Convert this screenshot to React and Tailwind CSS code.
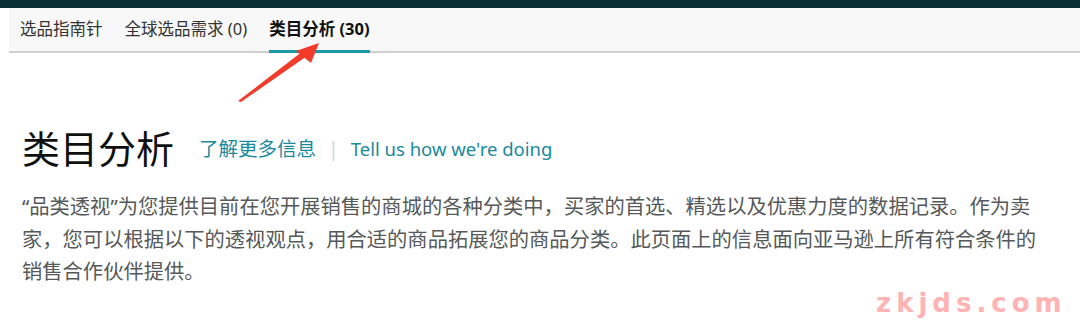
import React from 'react';

const tabs = [
  { label: '选品指南针' },
  { label: '全球选品需求 (0)' },
  { label: '类目分析 (30)', active: true },
];

const App = () => {
  return (
    <div className="relative w-[1080px] h-[333px] overflow-hidden bg-white font-['Noto_Sans','Noto_Sans_CJK_SC',sans-serif]">
      {/* top strip */}
      <div className="h-[8px] bg-[#0a2f35]" />

      {/* tabs */}
      <div className="ml-[9px] h-[45px] bg-[#f8f8f8] border-b-2 border-[#cfcfcf] flex items-stretch gap-[22px] pl-[11px]">
        {tabs.map((t) => (
          <div
            key={t.label}
            className={
              t.active
                ? 'flex items-center border-b-[3px] border-[#1a9aa8] -mb-[2px] text-[16.5px] font-bold text-[#0f1111]'
                : 'flex items-center text-[16.5px] text-[#333] pb-[1px]'
            }
          >
            {t.label}
          </div>
        ))}
      </div>

      {/* heading */}
      <div className="pl-[22px] pt-[67px] h-[123px] flex items-center">
        <h1 className="text-[38px] leading-[48px] text-[#0f1111] font-normal">类目分析</h1>
        <div className="flex items-center pt-[2px] text-[19.5px] leading-[28px]">
          <a className="ml-[25px] text-[#1a8a9c]">了解更多信息</a>
          <span className="mx-[12px] text-[#cfd6d8]">|</span>
          <a className="text-[18.5px] text-[#1a8a9c]">Tell us how we're doing</a>
        </div>
      </div>

      {/* description */}
      <p className="ml-[22px] mt-[14px] w-[1022px] text-[20.3px] leading-[32.5px] text-[#565959]">
        “品类透视”为您提供目前在您开展销售的商城的各种分类中，买家的首选、精选以及优惠力度的数据记录。作为卖家，您可以根据以下的透视观点，用合适的商品拓展您的商品分类。此页面上的信息面向亚马逊上所有符合条件的销售合作伙伴提供。
      </p>

      {/* red annotation arrow */}
      <svg className="absolute left-0 top-0" width="1080" height="333">
        <polygon points="238,101 241,102 307,56 303,51" fill="#f23b2b" />
        <polygon points="319,43 296,51 311,63" fill="#f23b2b" />
      </svg>

      {/* watermark */}
      <div className="absolute left-[876px] top-[290px] text-[26px] leading-[26px] font-bold tracking-[5px] text-[#ffb3b3] font-['DejaVu_Sans',sans-serif]">
        zkjds.com
      </div>
    </div>
  );
};

export default App;
